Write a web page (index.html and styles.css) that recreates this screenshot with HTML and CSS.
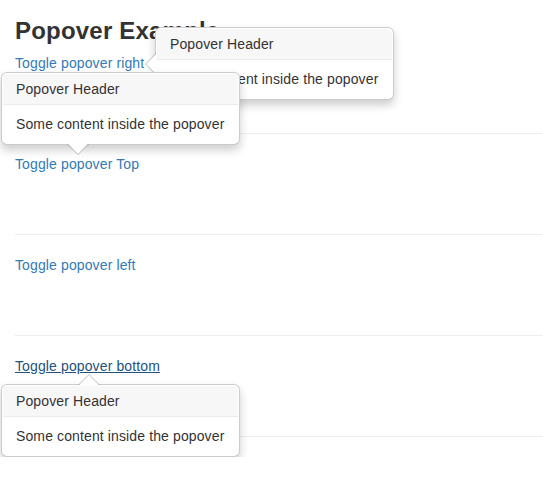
FILE: index.html
```html
<!DOCTYPE html>
<html>
<head>
<meta charset="utf-8">
<title>Popover Example</title>
<link rel="stylesheet" href="styles.css">
</head>
<body>
<div class="container">
  <h3 class="title">Popover Example</h3>
  <div class="demo">
    <span class="anchor">
      <a href="#" class="toggle">Toggle popover right</a>
      <div class="popover right pop-right">
        <div class="arrow"></div>
        <h3 class="popover-title">Popover Header</h3>
        <div class="popover-content">Some content inside the popover</div>
      </div>
    </span>
  </div>
  <hr class="rule">
  <div class="demo">
    <span class="anchor">
      <a href="#" class="toggle">Toggle popover Top</a>
      <div class="popover top pop-top">
        <div class="arrow"></div>
        <h3 class="popover-title">Popover Header</h3>
        <div class="popover-content">Some content inside the popover</div>
      </div>
    </span>
  </div>
  <hr class="rule">
  <div class="demo">
    <span class="anchor">
      <a href="#" class="toggle">Toggle popover left</a>
    </span>
  </div>
  <hr class="rule">
  <div class="demo">
    <span class="anchor">
      <a href="#" class="toggle focused">Toggle popover bottom</a>
      <div class="popover bottom pop-bottom">
        <div class="arrow"></div>
        <h3 class="popover-title">Popover Header</h3>
        <div class="popover-content">Some content inside the popover</div>
      </div>
    </span>
  </div>
  <hr class="rule">
</div>
</body>
</html>
```
FILE: styles.css
```css
* { box-sizing: border-box; }
html, body { margin: 0; padding: 0; background: #fff; }
body {
  font-family: "Liberation Sans", Arial, Helvetica, sans-serif;
  font-size: 14px;
  line-height: 20px;
  letter-spacing: 0.12px;
  color: #333;
}
.container { padding-left: 15px; }
.title {
  font-size: 24px;
  line-height: 26px;
  font-weight: 700;
  letter-spacing: 0.2px;
  margin: 18px 0 9px;
  color: #333;
}
.demo { height: 60px; }
.anchor { position: relative; display: inline-block; }
.toggle { color: #337ab7; text-decoration: none; }
.toggle.focused { color: #23527c; text-decoration: underline; }
.rule {
  margin: 20px 0;
  border: 0;
  border-top: 1px solid #eee;
  height: 0;
}
.popover {
  position: absolute;
  width: 239px;
  padding: 1px;
  background: #fff;
  border: 1px solid rgba(0,0,0,.2);
  border-radius: 6px;
  box-shadow: 0 5px 10px rgba(0,0,0,.2);
  text-align: left;
  z-index: 10;
}
.popover-title {
  margin: 0;
  padding: 8px 14px 8px 13px;
  font-size: 14px;
  line-height: 14px;
  font-weight: 400;
  background: #f7f7f7;
  border-bottom: 1px solid #ebebeb;
  border-radius: 5px 5px 0 0;
  color: #333;
}
.popover-content {
  padding: 9px 13px;
  line-height: 20px;
  color: #333;
}
.arrow, .arrow::after {
  position: absolute;
  display: block;
  width: 0;
  height: 0;
  border: 11px solid transparent;
}
.arrow::after { content: ""; border-width: 10px; }

.pop-right { left: 140px; top: -26px; }
.right .arrow {
  top: 50%;
  left: -11px;
  margin-top: -11px;
  border-left-width: 0;
  border-right-color: rgba(0,0,0,.25);
}
.right .arrow::after {
  left: 1px;
  bottom: -10px;
  border-left-width: 0;
  border-right-color: #fff;
}

.pop-top { left: -14px; top: -82px; }
.top .arrow {
  left: 76px;
  bottom: -11px;
  margin-left: -11px;
  border-bottom-width: 0;
  border-top-color: rgba(0,0,0,.25);
}
.top .arrow::after {
  bottom: 1px;
  margin-left: -10px;
  border-bottom-width: 0;
  border-top-color: #fff;
}

.pop-bottom { left: -14px; top: 28px; }
.bottom .arrow {
  left: 87px;
  top: -11px;
  margin-left: -11px;
  border-top-width: 0;
  border-bottom-color: rgba(0,0,0,.25);
}
.bottom .arrow::after {
  top: 1px;
  margin-left: -10px;
  border-top-width: 0;
  border-bottom-color: #fff;
}
```
